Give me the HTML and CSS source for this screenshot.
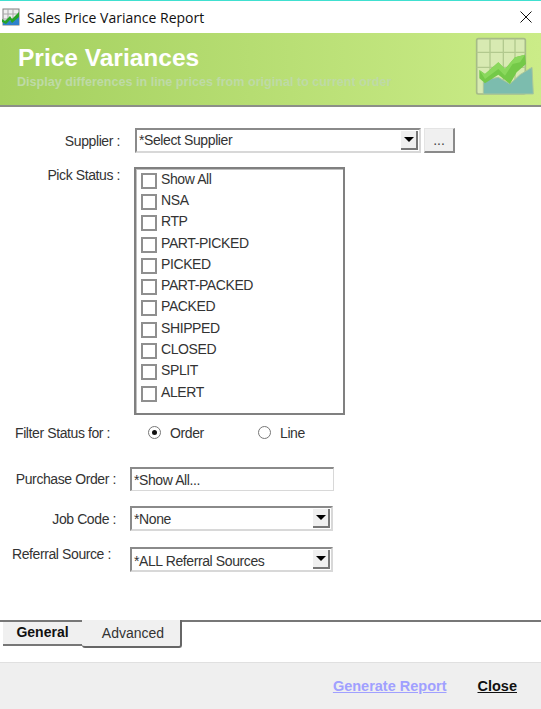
FILE: index.html
```html
<!DOCTYPE html>
<html lang="en">
<head>
    <meta charset="UTF-8">
    <meta name="viewport" content="width=device-width, initial-scale=1.0">
    <title>Sales Price Variance Report</title>
    <link rel="stylesheet" href="styles.css">
</head>
<body>
    <div class="window">
        <div class="titlebar">
            <svg class="app-icon" width="18" height="18" viewBox="0 0 18 18">
                <rect x="1" y="1" width="16" height="16" fill="#eeeeee" stroke="#808080"/>
                <path d="M1 6H17M1 11H17M6 1V17M11 1V17" stroke="#a8a8a8"/>
                <path d="M1 17V13L7 12L10 13L17 8V17Z" fill="#2f82cc"/>
                <path d="M0 11L3 13L8 8L10 11L17 4V9L10 15L8 12L4 16L0 14Z" fill="#27a327"/>
            </svg>
            <span class="title-text">Sales Price Variance Report</span>
            <svg class="close-x" width="12" height="12" viewBox="0 0 12 12">
                <path d="M0.5 0.5L11.5 11.5M11.5 0.5L0.5 11.5" stroke="#111" fill="none"/>
            </svg>
        </div>

        <div class="banner">
            <div class="banner-text">
                <h1>Price Variances</h1>
                <p>Display differences in line prices from original to current order</p>
            </div>
            <svg class="banner-icon" width="70" height="66" viewBox="0 0 210 198">
                <rect x="20" y="14" width="146" height="166" rx="5" fill="#d8eab2" stroke="#a6bb88" stroke-width="5"/>
                <path d="M20 55H166M20 100H166M60 14V180M100 14V180M135 14V180" stroke="#b2c98e" stroke-width="4"/>
                <path d="M40 145L60 135L85 130L120 150L150 122L186 100L190 180L40 180Z" fill="#7cbcae" stroke="#a9c79b" stroke-width="3"/>
                <path d="M28 108L45 120L85 85L105 105L135 70L165 62L168 90L140 115L120 150L85 122L45 148L28 133Z" fill="#74c948"/>
                <path d="M28 108L45 120L85 85L105 105L135 70L165 62L150 85L128 90L105 125L85 105L45 135Z" fill="#8ad85c"/>
            </svg>
        </div>

        <form class="form">
            <div class="supplier-row">
                <label class="field-label supplier-label">Supplier :</label>
                <div class="select supplier-select">
                    <span class="select-text">*Select Supplier</span>
                    <span class="arrow-btn"><i class="arrow"></i></span>
                </div>
                <button type="button" class="dots-btn">...</button>
            </div>

            <div class="status-row">
                <label class="field-label status-label">Pick Status :</label>
                <div class="listbox">
                    <div class="list-item"><i class="check"></i>Show All</div>
                    <div class="list-item"><i class="check"></i>NSA</div>
                    <div class="list-item"><i class="check"></i>RTP</div>
                    <div class="list-item"><i class="check"></i>PART-PICKED</div>
                    <div class="list-item"><i class="check"></i>PICKED</div>
                    <div class="list-item"><i class="check"></i>PART-PACKED</div>
                    <div class="list-item"><i class="check"></i>PACKED</div>
                    <div class="list-item"><i class="check"></i>SHIPPED</div>
                    <div class="list-item"><i class="check"></i>CLOSED</div>
                    <div class="list-item"><i class="check"></i>SPLIT</div>
                    <div class="list-item"><i class="check"></i>ALERT</div>
                </div>
            </div>

            <div class="filter-row">
                <label class="filter-label">Filter Status for :</label>
                <span class="radio-option order-option"><i class="radio radio-on"></i>Order</span>
                <span class="radio-option"><i class="radio"></i>Line</span>
            </div>

            <div class="po-row">
                <label class="field-label po-label">Purchase Order :</label>
                <div class="textbox">*Show All...</div>
            </div>

            <div class="job-row">
                <label class="field-label po-label">Job Code :</label>
                <div class="select small-select">
                    <span>*None</span>
                    <span class="arrow-btn"><i class="arrow"></i></span>
                </div>
            </div>

            <div class="referral-row">
                <label class="field-label referral-label">Referral Source :</label>
                <div class="select small-select">
                    <span class="referral-text">*ALL Referral Sources</span>
                    <span class="arrow-btn"><i class="arrow"></i></span>
                </div>
            </div>
        </form>

        <div class="tabs">
            <div class="tab tab-general">General</div>
            <div class="tab tab-advanced">Advanced</div>
        </div>

        <div class="footer">
            <a class="link link-disabled">Generate Report</a>
            <a class="link link-close">Close</a>
        </div>
    </div>
</body>
</html>
```

FILE: styles.css
```css
html, body {
    margin: 0;
    padding: 0;
}
body {
    font-family: "Liberation Sans", Arial, sans-serif;
    font-size: 14px;
    color: #222;
    background: #fff;
}
.window {
    width: 541px;
    height: 709px;
    display: flex;
    flex-direction: column;
    overflow: hidden;
    border-top: 1px solid #40e0d0;
    box-sizing: border-box;
}
.titlebar {
    height: 32px;
    display: flex;
    align-items: center;
    padding: 0 9px 0 2px;
    flex-shrink: 0;
}
.app-icon {
    margin-right: 7px;
}
.title-text {
    flex: 1;
    font-family: "Open Sans", sans-serif;
    font-size: 14px;
    color: #111;
}
.banner {
    height: 72px;
    border-bottom: 2px solid #8c8f88;
    background: linear-gradient(to right, #a4d05f, #cbec88);
    display: flex;
    justify-content: space-between;
    padding: 0 1px 0 18px;
    flex-shrink: 0;
}
.banner h1 {
    margin: 10px 0 0;
    font-size: 24.5px;
    line-height: 29px;
    color: #fff;
}
.banner p {
    margin: 3px 0 0 -1px;
    font-size: 12.6px;
    font-weight: bold;
    line-height: 15px;
    color: #bedaa6;
}
.banner-icon {
    margin-top: 1px;
}
.form {
    height: 513px;
    flex-shrink: 0;
    color: #333;
    letter-spacing: -0.4px;
}
.field-label {
    text-align: right;
    flex-shrink: 0;
}
.supplier-row {
    display: flex;
    align-items: center;
    margin-top: 21px;
}
.supplier-label {
    width: 120px;
    margin-right: 15px;
}
.select {
    height: 25px;
    box-sizing: border-box;
    border: 2px solid #8a8a8a;
    border-right-color: #d8d8d8;
    border-bottom-color: #d8d8d8;
    display: flex;
    align-items: center;
    justify-content: space-between;
    padding-left: 2px;
    background: #fff;
}
.select-text {
    padding-bottom: 2px;
}
.referral-text {
    padding-top: 2px;
}
.supplier-select {
    width: 286px;
    margin-right: 3px;
}
.small-select {
    width: 203px;
}
.arrow-btn {
    width: 17px;
    height: 19px;
    margin-right: 1px;
    background: #f0f0f0;
    border-right: 2px solid #777;
    border-bottom: 2px solid #777;
    box-sizing: border-box;
    display: flex;
    align-items: center;
    justify-content: center;
}
.arrow {
    width: 0;
    height: 0;
    border-left: 5px solid transparent;
    border-right: 5px solid transparent;
    border-top: 5px solid #000;
}
.dots-btn {
    width: 31px;
    height: 25px;
    padding: 0;
    border: 1px solid #e4e4e4;
    border-right: 2px solid #8a8a8a;
    border-bottom: 2px solid #8a8a8a;
    background: #f0f0f0;
    color: #444;
    font-family: inherit;
    font-size: 14px;
}
.status-row {
    display: flex;
    margin-top: 14px;
}
.status-label {
    width: 120px;
    margin-right: 14px;
}
.listbox {
    width: 211px;
    height: 248px;
    box-sizing: border-box;
    border: 2px solid #808080;
    box-shadow: inset 1px 1px 0 #c0c0c0;
    padding: 0 0 0 5px;
}
.list-item {
    height: 21.3px;
    box-sizing: border-box;
    padding-bottom: 2px;
    display: flex;
    align-items: center;
}
.check {
    width: 16px;
    height: 16px;
    box-sizing: border-box;
    border: 2px solid #8f8f8f;
    margin: 4px 4px 0 0;
    flex-shrink: 0;
}
.filter-row {
    display: flex;
    align-items: center;
    margin-top: 8px;
    height: 19px;
}
.filter-label {
    width: 148px;
    padding-left: 15px;
    box-sizing: border-box;
}
.radio-option {
    display: flex;
    align-items: center;
}
.order-option {
    width: 110px;
}
.radio {
    width: 13px;
    height: 13px;
    box-sizing: border-box;
    border: 1px solid #777;
    border-radius: 50%;
    margin-right: 9px;
    background: #fff;
    position: relative;
}
.radio-on::after {
    content: "";
    position: absolute;
    left: 3px;
    top: 3px;
    width: 5px;
    height: 5px;
    border-radius: 50%;
    background: #111;
}
.po-row, .job-row, .referral-row {
    display: flex;
    align-items: center;
}
.po-row {
    margin-top: 25px;
}
.job-row {
    margin-top: 15px;
}
.referral-row {
    margin-top: 15px;
}
.po-label {
    width: 116px;
    margin-right: 14px;
}
.referral-label {
    width: 111px;
    margin-right: 19px;
    margin-bottom: 11px;
}
.textbox {
    width: 204px;
    height: 24px;
    box-sizing: border-box;
    border: 2px solid #8a8a8a;
    border-right: 1px solid #d8d8d8;
    border-bottom: 1px solid #d8d8d8;
    padding-left: 2px;
    line-height: 22px;
}
.tabs {
    height: 42px;
    flex-shrink: 0;
    border-top: 2px solid #777;
    box-sizing: border-box;
    display: flex;
    align-items: flex-start;
}
.tab {
    background: #f0f0f0;
    box-sizing: border-box;
    text-align: center;
}
.tab-general {
    width: 79px;
    height: 24px;
    margin-left: 3px;
    font-weight: bold;
    font-size: 14px;
    line-height: 20px;
    border-bottom: 2px solid #777;
    color: #111;
}
.tab-advanced {
    width: 100px;
    height: 28px;
    margin-top: -2px;
    padding-left: 4px;
    line-height: 27px;
    font-size: 14px;
    border-right: 2px solid #666;
    border-bottom: 2px solid #666;
    border-radius: 0 0 3px 3px;
    color: #333;
}
.footer {
    flex: 1;
    background: #efefef;
    border-top: 1px solid #e0e0e0;
    display: flex;
    align-items: center;
    justify-content: flex-end;
    padding: 0 24px 0 0;
    gap: 31px;
}
.link {
    font-size: 14.5px;
    font-weight: bold;
    text-decoration: underline;
}
.link-disabled {
    color: #a0a0ff;
}
.link-close {
    color: #111;
}
```
